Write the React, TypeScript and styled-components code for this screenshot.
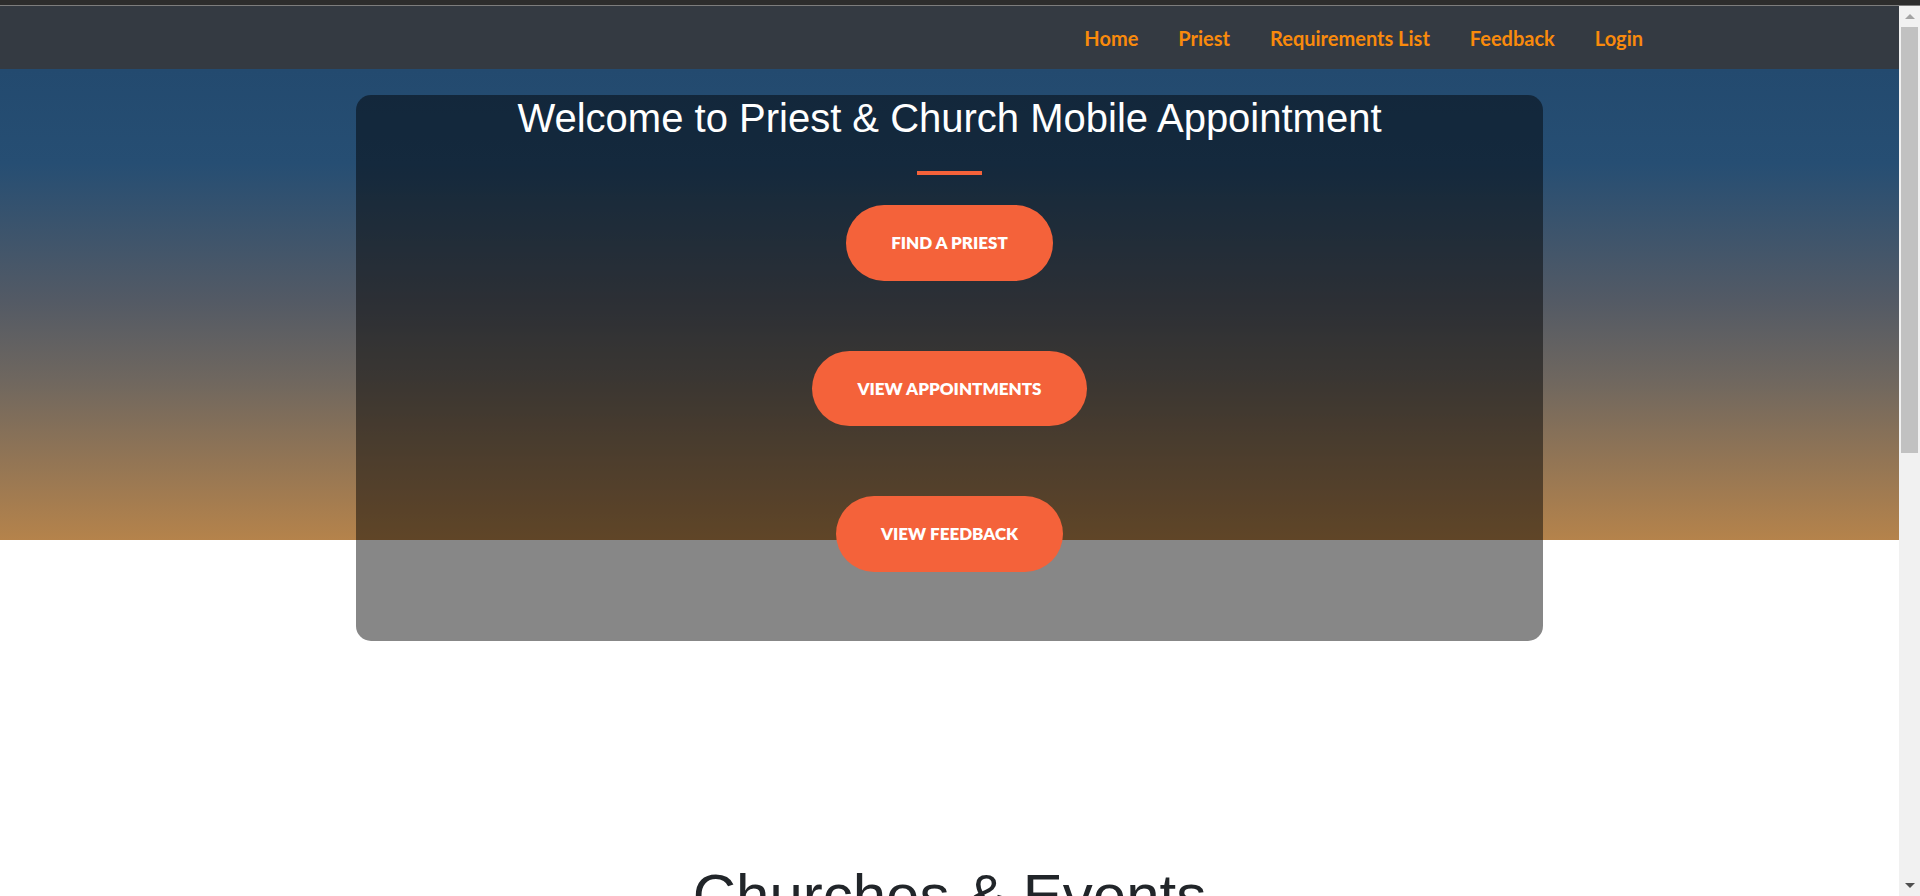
import React from "react";
import styled, { createGlobalStyle } from "styled-components";

const COLORS = {
  NAV: "#343a42",
  LINK: "#f98a0c",
  PRIMARY: "#f4623a",
  TEXT: "#212529",
  TRACK: "#f1f1f1",
  THUMB: "#c1c1c1",
};

const menuList = ["Home", "Priest", "Requirements List", "Feedback", "Login"];
const actionList = ["Find a priest", "View appointments", "View feedback"];

const GlobalStyle = createGlobalStyle`
  html, body {
    margin: 0;
    padding: 0;
    overflow: hidden;
  }
  body {
    font-family: "Liberation Sans", Arial, sans-serif;
    background: #ffffff;
  }
`;

const Frame = styled.div`
  height: 100vh;
  display: flex;
  flex-direction: column;
`;

const TopStrip = styled.div`
  height: 5px;
  flex-shrink: 0;
  background: #2d2d2d;
  border-bottom: 1px solid #7d7d7d;
`;

const Viewport = styled.div`
  flex: 1;
  display: flex;
  min-height: 0;
`;

const Page = styled.div`
  flex: 1;
  overflow: hidden;
  background: #ffffff;
`;

const NavBar = styled.nav`
  height: 63px;
  background: ${COLORS.NAV};
  display: flex;
  align-items: center;
  justify-content: flex-end;
  gap: 40px;
  padding-right: 256px;
  a {
    font-family: Lato, "Open Sans", sans-serif;
    font-weight: 700;
    font-size: 20px;
    color: ${COLORS.LINK};
    text-decoration: none;
    cursor: pointer;
  }
`;

const Hero = styled.header`
  height: 471px;
  padding-top: 26px;
  box-sizing: border-box;
  display: flex;
  justify-content: center;
  align-items: flex-start;
  background: linear-gradient(
    to bottom,
    #234a6f 0%,
    #264e73 20%,
    #535a65 49%,
    #6f675f 66%,
    #b5834b 100%
  );
`;

const Card = styled.div`
  width: 62.5%;
  height: 546px;
  flex-shrink: 0;
  border-radius: 15px;
  background: rgba(0, 0, 0, 0.47);
  padding-top: 3px;
  box-sizing: border-box;
  display: flex;
  flex-direction: column;
  align-items: center;
  h1 {
    margin: 0;
    font-family: "Liberation Sans", Arial, sans-serif;
    font-weight: 400;
    font-size: 40px;
    line-height: 40px;
    color: #ffffff;
  }
`;

const Divider = styled.hr`
  width: 65px;
  height: 4px;
  border: none;
  margin: 33px 0 30px;
  background: ${COLORS.PRIMARY};
`;

const ButtonStack = styled.div`
  display: flex;
  flex-direction: column;
  align-items: center;
  gap: 70px;
`;

const ActionButton = styled.button`
  font-family: Lato, "Open Sans", sans-serif;
  font-weight: 800;
  font-size: 17px;
  line-height: 1.5;
  text-transform: uppercase;
  color: #ffffff;
  background: ${COLORS.PRIMARY};
  border: none;
  border-radius: 200px;
  padding: 25px 45px;
  cursor: pointer;
`;

const Section = styled.section`
  padding-top: 320px;
  text-align: center;
  h2 {
    margin: 0;
    font-family: "Liberation Sans", Arial, sans-serif;
    font-weight: 400;
    font-size: 60px;
    line-height: 1.2;
    color: ${COLORS.TEXT};
  }
`;

const Scrollbar = styled.div`
  width: 21px;
  flex-shrink: 0;
  background: ${COLORS.TRACK};
  display: flex;
  flex-direction: column;
`;

const ArrowButton = styled.div<{ $dir: "up" | "down"; $color: string }>`
  height: 21px;
  display: flex;
  align-items: center;
  justify-content: center;
  &::before {
    content: "";
    border-left: 5px solid transparent;
    border-right: 5px solid transparent;
    ${(p) =>
      p.$dir === "up"
        ? `border-bottom: 5px solid ${p.$color};`
        : `border-top: 5px solid ${p.$color};`}
  }
`;

const Track = styled.div`
  flex: 1;
`;

const Thumb = styled.div`
  height: 426px;
  margin: 0 2px;
  background: ${COLORS.THUMB};
`;

export default function App() {
  return (
    <>
      <GlobalStyle />
      <Frame>
        <TopStrip />
        <Viewport>
          <Page>
            <NavBar>
              {menuList.map((menu) => (
                <a key={menu}>{menu}</a>
              ))}
            </NavBar>
            <Hero>
              <Card>
                <h1>Welcome to Priest &amp; Church Mobile Appointment</h1>
                <Divider />
                <ButtonStack>
                  {actionList.map((action) => (
                    <ActionButton key={action} type="button">
                      {action}
                    </ActionButton>
                  ))}
                </ButtonStack>
              </Card>
            </Hero>
            <Section>
              <h2>Churches &amp; Events</h2>
            </Section>
          </Page>
          <Scrollbar>
            <ArrowButton $dir="up" $color="#a3a3a3" />
            <Track>
              <Thumb />
            </Track>
            <ArrowButton $dir="down" $color="#505050" />
          </Scrollbar>
        </Viewport>
      </Frame>
    </>
  );
}
